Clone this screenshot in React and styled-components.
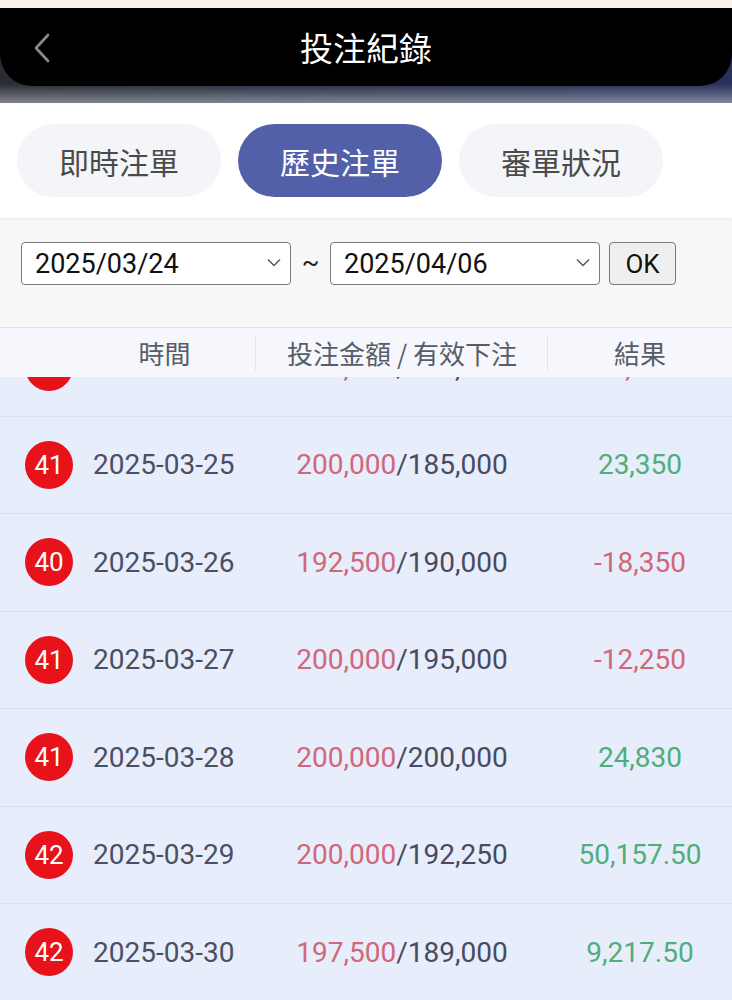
import React from 'react';
import styled, { createGlobalStyle } from 'styled-components';

const GlobalStyle = createGlobalStyle`
  html, body {
    margin: 0;
    padding: 0;
    background: #e8edfb;
  }
  body {
    font-family: Roboto, "Noto Sans CJK TC", "Noto Sans", sans-serif;
    overflow: hidden;
  }
`;

const Page = styled.div`
  width: 732px;
  min-height: 1000px;
  display: flex;
  flex-direction: column;
  background: #e8edfb;
`;

// top bar
const TopStrip = styled.div`
  height: 8px;
  background: #fcf0ea;
`;

const HeaderBack = styled.div`
  padding-bottom: 17px;
  background:
    linear-gradient(180deg, rgba(255, 255, 255, 0) 80%, rgba(200, 204, 214, 0.55) 100%),
    linear-gradient(90deg, #2a2c32 0%, #262d45 50%, #27315a 100%);
`;

const NavBar = styled.header`
  height: 78px;
  background: #000;
  border-radius: 0 0 32px 32px;
  display: flex;
  align-items: center;
  justify-content: center;
  position: relative;
`;

const BackButton = styled.button`
  position: absolute;
  left: 30px;
  top: 23px;
  width: 24px;
  height: 34px;
  padding: 0;
  border: none;
  background: none;
  display: flex;
  align-items: center;
  justify-content: center;
`;

const Title = styled.h1`
  margin: 0;
  color: #fff;
  font-family: "Noto Sans CJK TC", sans-serif;
  font-weight: 400;
  font-size: 33px;
  letter-spacing: 0;
`;

// tabs
const TabBar = styled.nav`
  background: #fff;
  padding: 21px 17px 21px;
  display: flex;
  gap: 17px;
  box-shadow: 0 1px 2px rgba(0, 0, 0, 0.06);
  position: relative;
  z-index: 1;
`;

const Tab = styled.button`
  width: 204px;
  height: 73px;
  border: none;
  border-radius: 37px;
  background: ${(p) => (p.$active ? '#525fa9' : '#f4f5f9')};
  color: ${(p) => (p.$active ? '#fff' : '#4a4a4a')};
  font-family: "Noto Sans CJK TC", sans-serif;
  font-size: 30px;
  font-weight: 400;
  display: flex;
  align-items: center;
  justify-content: center;
`;

// date filter
const FilterBar = styled.div`
  background: #f7f7f7;
  padding: 24px 21px 42px;
  display: flex;
  align-items: center;
`;

const SelectWrap = styled.div`
  position: relative;
  width: 270px;
  height: 43px;
`;

const DateSelect = styled.select`
  appearance: none;
  width: 100%;
  height: 100%;
  box-sizing: border-box;
  border: 1.5px solid #7a7a7a;
  border-radius: 4px;
  background: #fff;
  color: #111;
  font-family: Roboto, sans-serif;
  font-size: 27px;
  padding: 0 0 0 13px;
  line-height: 40px;
`;

const Chevron = styled.svg`
  position: absolute;
  right: 10px;
  top: 16px;
  pointer-events: none;
`;

const Tilde = styled.span`
  width: 39px;
  text-align: center;
  font-size: 26px;
  color: #222;
  font-family: Roboto, sans-serif;
  line-height: 1;
  padding-bottom: 4px;
`;

const OkButton = styled.button`
  margin-left: 9px;
  width: 67px;
  height: 43px;
  box-sizing: border-box;
  border: 1.5px solid #7a7a7a;
  border-radius: 4px;
  background: #efefef;
  color: #111;
  font-family: Roboto, sans-serif;
  font-size: 26px;
  padding: 0;
`;

// table
const GRID = '73px 183px 292px 1fr';

const TableHead = styled.div`
  display: grid;
  grid-template-columns: ${GRID};
  height: 50px;
  background: #f5f7fd;
  border-top: 1px solid #dee3ef;
  box-sizing: border-box;
  position: relative;
  z-index: 1;
`;

const HeadCell = styled.div`
  grid-column: ${(p) => p.$span || 'auto'};
  display: flex;
  align-items: center;
  justify-content: center;
  font-family: "Noto Sans CJK TC", sans-serif;
  font-size: 26px;
  color: #585c68;
  position: relative;

  ${(p) =>
    p.$divider &&
    `
    &::after {
      content: '';
      position: absolute;
      right: 0;
      top: 7px;
      bottom: 7px;
      width: 1px;
      background: #e1e4ec;
    }
  `}
`;

const Viewport = styled.div`
  flex: 1;
  overflow: hidden;
`;

const Track = styled.div`
  margin-top: -58px;
`;

const Row = styled.div`
  display: grid;
  grid-template-columns: ${GRID};
  align-items: center;
  height: 97.5px;
  box-sizing: border-box;
  border-bottom: 1.5px solid #d9dff0;
  font-family: Roboto, sans-serif;
  font-size: 28px;
`;

const Badge = styled.span`
  margin-left: 25px;
  width: 48px;
  height: 48px;
  border-radius: 50%;
  background: #e8121a;
  color: #fff;
  font-size: 26px;
  display: flex;
  align-items: center;
  justify-content: center;
`;

const DateText = styled.span`
  padding-left: 20px;
  color: #4b4f63;
`;

const Amount = styled.span`
  text-align: center;
  color: #474b5f;
`;

const Bet = styled.span`
  color: #d0677a;
`;

const Result = styled.span`
  text-align: center;
  color: ${(p) => (p.$neg ? '#d0677a' : '#4fae7c')};
`;

const rows = [
  { n: 41, date: '2025-03-24', bet: '200,000', valid: '190,000', res: '-5,000' },
  { n: 41, date: '2025-03-25', bet: '200,000', valid: '185,000', res: '23,350' },
  { n: 40, date: '2025-03-26', bet: '192,500', valid: '190,000', res: '-18,350' },
  { n: 41, date: '2025-03-27', bet: '200,000', valid: '195,000', res: '-12,250' },
  { n: 41, date: '2025-03-28', bet: '200,000', valid: '200,000', res: '24,830' },
  { n: 42, date: '2025-03-29', bet: '200,000', valid: '192,250', res: '50,157.50' },
  { n: 42, date: '2025-03-30', bet: '197,500', valid: '189,000', res: '9,217.50' },
];

const DownArrow = () => (
  <Chevron width="14" height="9" viewBox="0 0 14 9" fill="none">
    <path d="M1 1.5 L7 7.5 L13 1.5" stroke="#555" strokeWidth="1.4" />
  </Chevron>
);

const App = () => {
  return (
    <Page>
      <GlobalStyle />
      <TopStrip />
      <HeaderBack>
        <NavBar>
          <BackButton aria-label="back">
            <svg width="18" height="30" viewBox="0 0 18 30" fill="none">
              <path d="M15 2 L3 15 L15 28" stroke="#8b8b8f" strokeWidth="2.6" strokeLinecap="round" strokeLinejoin="round" />
            </svg>
          </BackButton>
          <Title>投注紀錄</Title>
        </NavBar>
      </HeaderBack>

      <TabBar>
        <Tab>即時注單</Tab>
        <Tab $active>歷史注單</Tab>
        <Tab>審單狀況</Tab>
      </TabBar>

      <FilterBar>
        <SelectWrap>
          <DateSelect defaultValue="2025/03/24">
            <option>2025/03/24</option>
          </DateSelect>
          <DownArrow />
        </SelectWrap>
        <Tilde>~</Tilde>
        <SelectWrap>
          <DateSelect defaultValue="2025/04/06">
            <option>2025/04/06</option>
          </DateSelect>
          <DownArrow />
        </SelectWrap>
        <OkButton>OK</OkButton>
      </FilterBar>

      <TableHead>
        <HeadCell $span="2 / 3" $divider>時間</HeadCell>
        <HeadCell $divider>投注金額 / 有效下注</HeadCell>
        <HeadCell>結果</HeadCell>
      </TableHead>

      <Viewport>
        <Track>
          {rows.map((r) => (
            <Row key={r.date}>
              <Badge>{r.n}</Badge>
              <DateText>{r.date}</DateText>
              <Amount>
                <Bet>{r.bet}</Bet>/{r.valid}
              </Amount>
              <Result $neg={r.res.startsWith('-')}>{r.res}</Result>
            </Row>
          ))}
        </Track>
      </Viewport>
    </Page>
  );
};

export default App;
